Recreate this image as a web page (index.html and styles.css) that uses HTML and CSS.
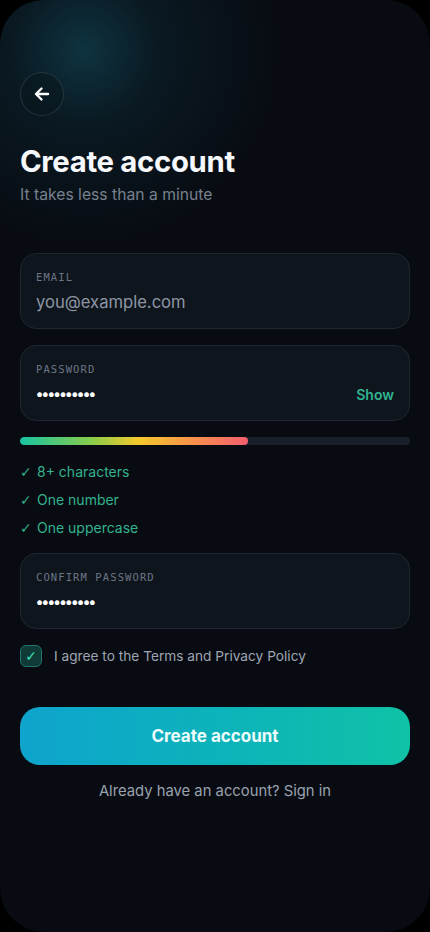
FILE: index.html
```html
<!DOCTYPE html>
<html lang="en">
<head>
<meta charset="utf-8">
<meta name="viewport" content="width=430, initial-scale=1">
<title>Create account</title>
<link rel="stylesheet" href="styles.css">
</head>
<body>
<div class="screen">
  <button class="back" aria-label="Back">
    <svg width="20" height="20" viewBox="0 0 20 20" fill="none" stroke="#ffffff" stroke-width="2.4" stroke-linecap="round" stroke-linejoin="round"><path d="M16 10H4.5M9.5 4.5L4 10l5.5 5.5"/></svg>
  </button>
  <h1 class="title">Create account</h1>
  <p class="subtitle">It takes less than a minute</p>

  <div class="field field-email">
    <div class="label">EMAIL</div>
    <div class="value placeholder">you@example.com</div>
  </div>

  <div class="field field-pass">
    <div class="label">PASSWORD</div>
    <div class="row">
      <div class="dots">••••••••••</div>
      <span class="show">Show</span>
    </div>
  </div>

  <div class="strength"><div class="strength-fill" style="width:58.5%"></div></div>

  <ul class="checks">
    <li><span class="tick">✓</span>8+ characters</li>
    <li><span class="tick">✓</span>One number</li>
    <li><span class="tick">✓</span>One uppercase</li>
  </ul>

  <div class="field field-confirm">
    <div class="label">CONFIRM PASSWORD</div>
    <div class="row">
      <div class="dots">••••••••••</div>
    </div>
  </div>

  <div class="agree">
    <span class="box">✓</span>
    <span class="agree-text">I agree to the Terms and Privacy Policy</span>
  </div>

  <button class="primary">Create account</button>
  <p class="signin">Already have an account? Sign in</p>
</div>
</body>
</html>
```
FILE: styles.css
```css
* { box-sizing: border-box; }
html, body {
  margin: 0;
  padding: 0;
  background: #000;
}
body {
  font-family: Inter, "Noto Sans", "Liberation Sans", sans-serif;
}
.screen {
  width: 430px;
  height: 932px;
  border-radius: 44px;
  overflow: hidden;
  padding: 72px 20px 0;
  background:
    radial-gradient(circle at 84px 50px, rgba(18, 78, 96, 0.6) 0, rgba(14, 52, 66, 0.34) 75px, rgba(10, 20, 28, 0) 200px),
    #080b11;
  display: flex;
  flex-direction: column;
}
.back {
  width: 44px;
  height: 44px;
  border-radius: 50%;
  border: 1px solid rgba(120, 150, 170, 0.22);
  background: rgba(10, 22, 30, 0.55);
  display: flex;
  align-items: center;
  justify-content: center;
  padding: 0;
}
.title {
  margin: 28px 0 0;
  font-size: 29.3px;
  line-height: 36px;
  font-weight: 700;
  color: #f6f8fb;
  letter-spacing: -0.3px;
}
.subtitle {
  margin: 5px 0 0;
  font-size: 15.7px;
  line-height: 20px;
  color: #77818f;
}
.field {
  height: 76px;
  border-radius: 16px;
  background: #0f151c;
  border: 1px solid #1e2731;
  padding: 16px 15px 0;
}
.field-email { margin-top: 48px; }
.field-pass { margin-top: 16px; }
.field-confirm { margin-top: 11px; }
.label {
  font-family: "DejaVu Sans Mono", "Liberation Mono", monospace;
  font-size: 10.5px;
  line-height: 14px;
  letter-spacing: 1.1px;
  color: #6c7687;
}
.value {
  margin-top: 7px;
  font-size: 16.6px;
  line-height: 22px;
}
.placeholder { color: #8c96a5; }
.row {
  margin-top: 7px;
  height: 22px;
  display: flex;
  justify-content: space-between;
  align-items: center;
}
.dots {
  color: #ffffff;
  font-size: 15px;
  letter-spacing: -1.25px;
  font-weight: 700;
  line-height: 22px;
}
.show {
  font-size: 14px;
  font-weight: 600;
  color: #2fb493;
}
.strength {
  margin-top: 16px;
  height: 8px;
  border-radius: 4px;
  background: #1a202a;
  overflow: hidden;
}
.strength-fill {
  height: 100%;
  border-radius: 4px;
  background: linear-gradient(90deg, #19c3a2 0%, #8ccc4a 32%, #f5c92c 52%, #f7934a 75%, #f35d6e 100%);
}
.checks {
  list-style: none;
  margin: 13px 0 0;
  padding: 0;
}
.checks li {
  height: 28px;
  line-height: 28px;
  font-size: 14px;
  color: #33b48f;
  display: flex;
  align-items: center;
}
.tick {
  width: 17px;
  font-family: "DejaVu Sans", sans-serif;
  font-size: 14px;
  color: #2ea988;
}
.agree {
  margin-top: 16px;
  display: flex;
  align-items: center;
  gap: 12px;
}
.box {
  width: 22px;
  height: 22px;
  border-radius: 6px;
  background: #0f3a36;
  border: 1px solid #22756a;
  color: #3ee0bb;
  font-family: "DejaVu Sans", sans-serif;
  font-size: 14px;
  display: flex;
  align-items: center;
  justify-content: center;
}
.agree-text {
  font-size: 13.7px;
  color: #9ea6b3;
}
.primary {
  margin-top: 40px;
  height: 58px;
  width: 100%;
  border: none;
  border-radius: 20px;
  background: linear-gradient(90deg, #0ea4cd 0%, #0cb4b9 55%, #10c2a6 100%);
  color: #eefcfb;
  font-family: Inter, "Noto Sans", "Liberation Sans", sans-serif;
  font-size: 17px;
  font-weight: 700;
}
.signin {
  margin: 16px 0 0;
  text-align: center;
  font-size: 14.8px;
  line-height: 20px;
  color: #9aa2af;
}
```
